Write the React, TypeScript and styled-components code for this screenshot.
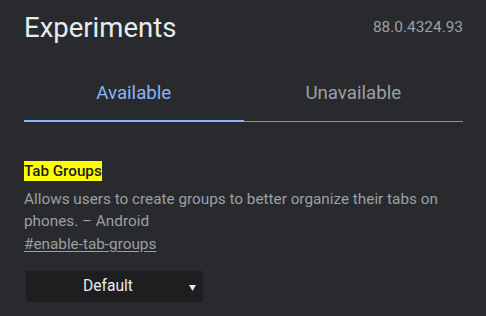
import { createGlobalStyle, styled } from "styled-components";

const GlobalStyle = createGlobalStyle`
  html, body {
    margin: 0;
    padding: 0;
    background: #292a2d;
  }
  body {
    font-family: Roboto, "Liberation Sans", sans-serif;
    color: #e8eaed;
  }
`;

const Page = styled.div`
  width: 486px;
  height: 316px;
  box-sizing: border-box;
  padding: 12px 23px 0 24px;
  overflow: hidden;
`;

const Header = styled.header`
  display: flex;
  justify-content: space-between;
  align-items: center;
  height: 32px;
`;

const Title = styled.h1`
  margin: 0;
  font-size: 27.5px;
  line-height: 32px;
  font-weight: 400;
  color: #e8eaed;
`;

const Version = styled.span`
  font-size: 15.4px;
  line-height: 18px;
  margin-top: -3px;
  color: #9aa0a6;
`;

const Tabs = styled.div`
  display: flex;
  border-bottom: 1px solid #8f9296;
`;

const Tab = styled.div<{ $active?: boolean }>`
  flex: 1;
  text-align: center;
  font-size: 18.7px;
  line-height: 22px;
  padding: 38px 0 16px;
  color: ${(p) => (p.$active ? "#8ab4f8" : "#9aa0a6")};
  border-bottom: 2px solid ${(p) => (p.$active ? "#8ab4f8" : "transparent")};
  margin-bottom: -1px;
`;

const Experiment = styled.section`
  margin-top: 39px;
  font-size: 15.3px;
`;

const Name = styled.h2`
  display: inline-block;
  margin: 0;
  font-size: 15.2px;
  font-weight: 500;
  line-height: 20px;
  background: #ffff00;
  color: #202124;
`;

const Description = styled.p`
  margin: 8px 0 0;
  line-height: 21.5px;
  color: #9aa0a6;
`;

const Link = styled.a`
  display: inline-block;
  margin-top: 2px;
  color: #9aa0a6;
  text-decoration: underline;
  text-underline-offset: 2px;
  line-height: 21.5px;
`;

const Select = styled.div`
  position: relative;
  width: 177px;
  height: 31px;
  margin: 15px 0 0 2px;
  background: #1e1e20;
  color: #e8eaed;
  font-size: 15.6px;
  line-height: 31px;
  text-align: center;
  padding-right: 13px;
  box-sizing: border-box;
`;

const Arrow = styled.svg`
  position: absolute;
  right: 7px;
  top: 14px;
`;

export default function App() {
  return (
    <>
      <GlobalStyle />
      <Page>
        <Header>
          <Title>Experiments</Title>
          <Version>88.0.4324.93</Version>
        </Header>
        <Tabs>
          <Tab $active>Available</Tab>
          <Tab>Unavailable</Tab>
        </Tabs>
        <Experiment>
          <Name>Tab Groups</Name>
          <Description>
            Allows users to create groups to better organize their tabs on
            phones. – Android
          </Description>
          <Link>#enable-tab-groups</Link>
          <Select>
            Default
            <Arrow width="7" height="6" viewBox="0 0 7 6">
              <path d="M0 0H7L3.5 6Z" fill="#e8eaed" />
            </Arrow>
          </Select>
        </Experiment>
      </Page>
    </>
  );
}
